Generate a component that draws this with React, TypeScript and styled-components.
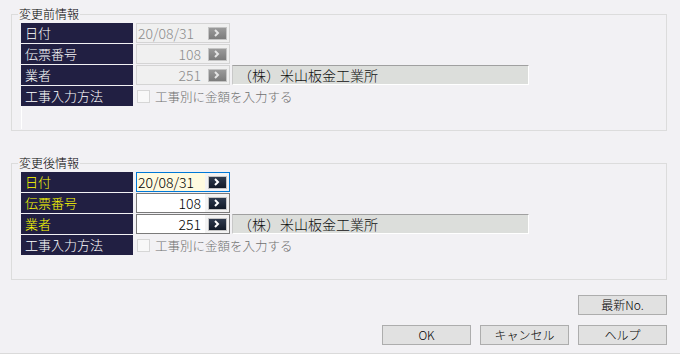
import React from "react";
import styled, { createGlobalStyle } from "styled-components";

const GlobalStyle = createGlobalStyle`
  html, body {
    margin: 0;
    padding: 0;
    background: #f2f1f4;
  }
  body {
    font-family: "Noto Sans CJK JP", "Noto Sans", sans-serif;
    font-weight: 300;
  }
`;

const Window = styled.div`
  width: 680px;
  height: 354px;
  box-sizing: border-box;
  display: flex;
  flex-direction: column;
  padding: 14px 13px 0 11px;
  border-bottom: 1px solid #dadada;
`;

const GroupBox = styled.div<{ $top?: number }>`
  position: relative;
  box-sizing: border-box;
  height: 117px;
  margin-top: ${(p) => p.$top || 0}px;
  border: 1px solid #dcdcdc;
  padding: 8px 0 1px 9px;
  display: flex;
  flex-direction: column;
`;

const Legend = styled.span`
  position: absolute;
  top: -9px;
  left: 6px;
  padding: 0 1px;
  background: #f2f1f4;
  font-size: 12px;
  line-height: 16px;
  color: #000;
`;

const Rows = styled.div`
  display: flex;
  flex-direction: column;
  gap: 1px;
`;

const Row = styled.div`
  display: flex;
  align-items: center;
  height: 20px;
`;

const Label = styled.div<{ $accent?: boolean }>`
  box-sizing: border-box;
  width: 112px;
  height: 20px;
  margin-right: 3px;
  padding-left: 4px;
  background: #211f42;
  color: ${(p) => (p.$accent ? "#ffff00" : "#ffffff")};
  font-size: 13px;
  line-height: 20px;
`;

type Mode = "disabled" | "focused" | "normal";

const Field = styled.div<{ $mode: Mode }>`
  box-sizing: border-box;
  width: 94px;
  height: 20px;
  display: flex;
  border: 1px solid
    ${(p) =>
      p.$mode === "focused" ? "#0078d7" : p.$mode === "normal" ? "#7a7a7a" : "#d4d4d4"};
  background: ${(p) => (p.$mode === "disabled" ? "#f0f0f0" : "#f3f3f3")};
`;

const Value = styled.div<{ $mode: Mode; $left?: boolean }>`
  flex: 1;
  padding: 0 4px 0 1px;
  font-size: 14px;
  line-height: 18px;
  text-align: ${(p) => (p.$left ? "left" : "right")};
  color: ${(p) => (p.$mode === "disabled" ? "#8c8c8c" : "#000")};
  background: ${(p) =>
    p.$mode === "focused" ? "#fffbe0" : p.$mode === "normal" ? "#ffffff" : "#f0f0f0"};
`;

const ArrowCell = styled.div`
  width: 24px;
  display: flex;
  align-items: center;
  justify-content: center;
`;

const ArrowBtn = styled.div<{ $disabled?: boolean }>`
  box-sizing: border-box;
  width: 19px;
  height: 13px;
  display: flex;
  align-items: center;
  justify-content: center;
  border: 1px solid #c4c4c4;
  background: ${(p) =>
    p.$disabled
      ? "linear-gradient(#9a9a9a, #7c7c7c)"
      : "linear-gradient(#2e3a4e, #121a28)"};
`;

const Company = styled.div`
  box-sizing: border-box;
  width: 297px;
  height: 20px;
  margin-left: 2px;
  padding-left: 5px;
  background: #dcdedb;
  border-top: 1px solid #a0a0a0;
  border-left: 1px solid #c8c8c8;
  border-right: 1px solid #fff;
  border-bottom: 1px solid #fff;
  font-size: 14px;
  line-height: 18px;
  color: #111;
`;

const Check = styled.span`
  box-sizing: border-box;
  width: 13px;
  height: 13px;
  margin: 0 5px 0 1px;
  border: 1px solid #d6d6d6;
  background: #f8f8f8;
`;

const CheckText = styled.span`
  font-size: 12.5px;
  color: #707070;
`;

const Filler = styled.div`
  flex: 1;
  border-left: 1px solid #ffffff;
`;

const ButtonArea = styled.div`
  display: flex;
  flex-direction: column;
  align-items: flex-end;
  margin-top: 15px;
`;

const ButtonRow = styled.div`
  display: flex;
  gap: 9px;
  margin-top: 10px;
`;

const Button = styled.button`
  box-sizing: border-box;
  width: 89px;
  height: 20px;
  padding: 0;
  border: 1px solid #adadad;
  background: #e1e1e1;
  font-family: inherit;
  font-weight: 300;
  font-size: 12px;
  line-height: 18px;
  color: #000;
`;

const Chevron = ({ color }: { color: string }) => (
  <svg width="6" height="8" viewBox="0 0 6 8">
    <polyline points="1,1 4,4 1,7" fill="none" stroke={color} strokeWidth="2" />
  </svg>
);

interface InputProps {
  mode: Mode;
  value: string;
  left?: boolean;
}

const Input = ({ mode, value, left }: InputProps) => (
  <Field $mode={mode}>
    <Value $mode={mode} $left={left}>
      {value}
    </Value>
    <ArrowCell>
      <ArrowBtn $disabled={mode === "disabled"}>
        <Chevron color={mode === "disabled" ? "#e4e4e4" : "#ffffff"} />
      </ArrowBtn>
    </ArrowCell>
  </Field>
);

const Section = ({ title, after }: { title: string; after?: boolean }) => {
  const m = (focused: boolean): Mode =>
    !after ? "disabled" : focused ? "focused" : "normal";
  return (
    <GroupBox $top={after ? 32 : 0}>
      <Legend>{title}</Legend>
      <Rows>
        <Row>
          <Label $accent={after}>日付</Label>
          <Input mode={m(true)} value="20/08/31" left />
        </Row>
        <Row>
          <Label $accent={after}>伝票番号</Label>
          <Input mode={m(false)} value="108" />
        </Row>
        <Row>
          <Label $accent={after}>業者</Label>
          <Input mode={m(false)} value="251" />
          <Company>（株）米山板金工業所</Company>
        </Row>
        <Row>
          <Label>工事入力方法</Label>
          <Check />
          <CheckText>工事別に金額を入力する</CheckText>
        </Row>
      </Rows>
      {!after && <Filler />}
    </GroupBox>
  );
};

export default function App() {
  return (
    <>
      <GlobalStyle />
      <Window>
        <Section title="変更前情報" />
        <Section title="変更後情報" after />
        <ButtonArea>
          <Button>最新No.</Button>
          <ButtonRow>
            <Button>OK</Button>
            <Button>キャンセル</Button>
            <Button>ヘルプ</Button>
          </ButtonRow>
        </ButtonArea>
      </Window>
    </>
  );
}
